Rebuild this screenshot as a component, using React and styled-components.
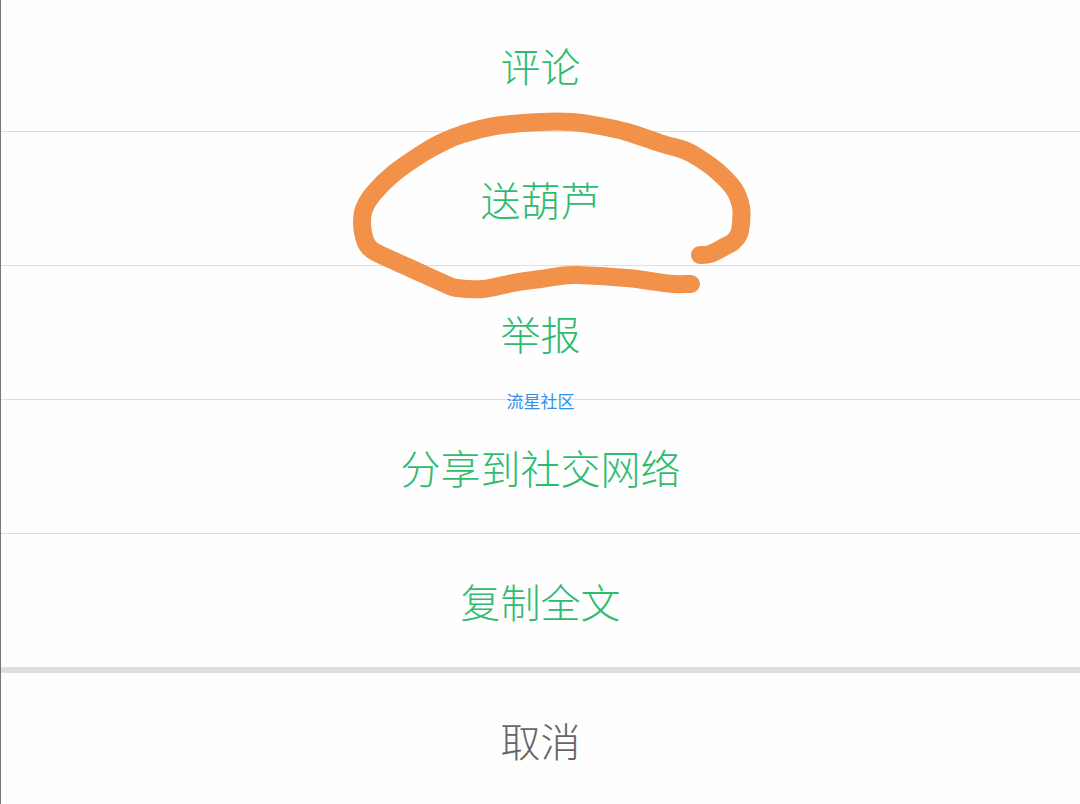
import React from 'react'
import styled, { createGlobalStyle } from 'styled-components'

const actions = [
  { id: 'comment', label: '评论' },
  { id: 'gift', label: '送葫芦', circled: true },
  { id: 'report', label: '举报', mark: '流星社区' },
  { id: 'share', label: '分享到社交网络' },
  { id: 'copy', label: '复制全文' },
]

const strokePoints = [
  [350, 145], [360, 144], [374, 137], [383, 132], [389, 124], [391, 113], [391, 97],
  [384, 79], [367, 61], [349, 48], [334, 40], [313, 34], [277, 22], [250, 16],
  [222, 12], [190, 12], [145, 16], [113, 24], [93, 32], [73, 43], [43, 64],
  [23, 84], [14, 99], [12, 113], [14, 127], [18, 136], [27, 143], [60, 158],
  [93, 173], [107, 178], [133, 179], [163, 173], [190, 169], [210, 166],
  [227, 165], [277, 168], [300, 171], [323, 174], [341, 174],
]

// cubic curves that pass through every point of the pen line
const penPath = (points) => {
  let d = `M${points[0].join(' ')}`
  for (let i = 0; i < points.length - 1; i++) {
    const prev = points[i - 1] || points[i]
    const from = points[i]
    const to = points[i + 1]
    const next = points[i + 2] || to
    d += ` C${from[0] + (to[0] - prev[0]) / 6} ${from[1] + (to[1] - prev[1]) / 6}`
    d += ` ${to[0] - (next[0] - from[0]) / 6} ${to[1] - (next[1] - from[1]) / 6}`
    d += ` ${to[0]} ${to[1]}`
  }
  return d
}

export default function App() {
  return (
    <>
      <GlobalStyle />
      <Sheet>
        <Actions>
          {actions.map((action) => (
            <Item key={action.id}>
              <Action type="button">{action.label}</Action>
              {action.circled && (
                <Pen viewBox="0 0 402 190" aria-hidden="true">
                  <path d={penPath(strokePoints)} />
                </Pen>
              )}
              {action.mark && <Mark>{action.mark}</Mark>}
            </Item>
          ))}
        </Actions>
        <Cancel type="button">取消</Cancel>
      </Sheet>
    </>
  )
}

const GlobalStyle = createGlobalStyle`
* {
  box-sizing: border-box;
}
body {
  margin: 0;
  background: #fefefe;
  font-family: "Liberation Sans", "Noto Sans CJK SC", sans-serif;
}
`

const Sheet = styled.main`
display: flex;
flex-direction: column;
min-height: 100vh;
border-left: 1px solid #777;
`

const Actions = styled.ul`
margin: 0;
padding: 0;
list-style: none;
border-bottom: 6px solid #dfdfdf;
`

const Action = styled.button`
display: block;
width: 100%;
padding: 40px 0 33px;
border: 0;
background: transparent;
color: #2fbb6e;
font-family: inherit;
font-size: 40px;
font-weight: 300;
line-height: 60px;
text-align: center;
cursor: pointer;
`

const Item = styled.li`
position: relative;
border-bottom: 1px solid #dcdfdf;

&:first-child ${Action}{
    padding-top: 38px;
}
&:last-child{
    border-bottom: 0;
}
`

const Cancel = styled(Action)`
padding-bottom: 31px;
color: #666;
`

const Pen = styled.svg`
position: absolute;
z-index: 1;
top: -22px;
left: 50%;
width: 402px;
height: 190px;
margin-left: -191px;
pointer-events: none;

path{
    fill: none;
    stroke: #f29149;
    stroke-width: 18;
    stroke-linecap: round;
    stroke-linejoin: round;
}
`

const Mark = styled.span`
position: absolute;
z-index: 1;
bottom: -16px;
left: 0;
width: 100%;
color: #2f8fea;
font-size: 17px;
line-height: 24px;
text-align: center;
pointer-events: none;
`
